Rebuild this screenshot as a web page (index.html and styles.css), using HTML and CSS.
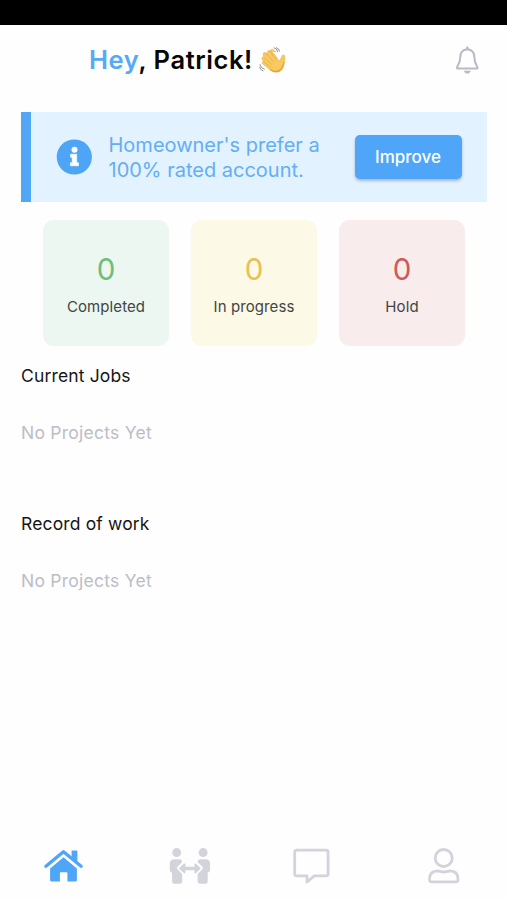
FILE: index.html
```html
<!DOCTYPE html>
<html lang="en">
<head>
<meta charset="utf-8">
<meta name="viewport" content="width=device-width, initial-scale=1">
<title>Home</title>
<link rel="stylesheet" href="styles.css">
</head>
<body>
<div class="screen">
  <div class="statusbar"></div>
  <header class="header">
    <h1 class="greeting"><span class="hey">Hey</span>, Patrick!</h1>
    <svg class="wave" viewBox="256 44 32 32" aria-hidden="true">
      <g fill="none" stroke-linecap="round">
        <path d="M275.5 51.6L272.6 49.4Q271.2 48.6 270.8 50.6L275 55.2 279.2 61.2 281.4 57.6Q282 54.4 283.8 55Q285.6 56 284.5 60.5L283.8 65.5Q282.7 71.8 276.4 72.2Q272.8 72.2 270 69.7L262.5 63.6Q261.4 61.6 263.6 61.6L262 59.2Q261.2 56.8 263.7 57.2L263.2 54Q263.6 51.7 266 53L267.4 54 267.3 51.6Q268 49.7 270 50.8Z" fill="#f7c95e" stroke="#efb74c" stroke-width=".7"/>
        <path d="M266 53.5L273.5 61.5M264 57.3L271.5 64.4M264 61.8L270.4 67.2M269.8 51L276 59.3" stroke="#e3a942" stroke-width=".7"/>
        <path d="M270.5 69.7Q276.5 73.6 281 69.2Q283.5 66 284 62" stroke="#dfa13c" stroke-width="1.2"/>
        <path d="M274 47.8Q277.2 48 277.8 51.8M276.5 47.6Q279.3 48.4 279.5 51.2M260 64.5Q260.6 68.2 264.3 69.3M259.5 67Q260.4 70.3 263 71" stroke="#888" stroke-width=".9"/>
      </g>
    </svg>
    <svg class="bell" viewBox="452 42 32 34" aria-hidden="true">
      <path d="M467.3 48.3C462.4 48.8 460.2 51.7 460.2 56.4C460.2 62.2 457.8 63.6 457 66.5Q456.8 67.5 458 67.5H476.6Q477.8 67.5 477.5 66.5C476.7 63.6 474.4 62.2 474.4 56.4C474.4 51.7 472.2 48.8 467.3 48.3Z" fill="none" stroke="#b9bac5" stroke-width="2"/>
      <path d="M467.3 48V46.6" stroke="#b9bac5" stroke-width="2.4" stroke-linecap="round"/>
      <path d="M463.9 69.8H470.8Q470 72.6 467.3 72.6T463.9 69.8Z" fill="#b9bac5"/>
    </svg>
  </header>

  <section class="notice">
    <svg class="info" viewBox="0 0 36 36" aria-hidden="true">
      <circle cx="18.3" cy="18" r="17.6" fill="#4fa5f5"/>
      <circle cx="18.5" cy="10.7" r="3" fill="#fff"/>
      <path d="M14.6 15.2H20.7V23.8H22.5V26.8H14.4V23.8H16.2V18.2H14.6Z" fill="#fff" stroke="#fff" stroke-width=".6" stroke-linejoin="round"/>
    </svg>
    <p class="message">Homeowner's prefer a<br>100% rated account.</p>
    <button class="improve" type="button">Improve</button>
  </section>

  <section class="stats">
    <div class="stat completed"><span class="count">0</span><span class="label">Completed</span></div>
    <div class="stat progress"><span class="count">0</span><span class="label">In progress</span></div>
    <div class="stat hold"><span class="count">0</span><span class="label">Hold</span></div>
  </section>

  <section class="jobs">
    <h2 class="title">Current Jobs</h2>
    <p class="empty">No Projects Yet</p>
  </section>
  <section class="jobs">
    <h2 class="title">Record of work</h2>
    <p class="empty">No Projects Yet</p>
  </section>

  <nav class="tabs">
    <a class="tab active" aria-label="Home">
      <svg viewBox="38.4 844 50 44">
        <path d="M46.3 866.2L63.9 851.7L81.5 866.2" fill="none" stroke="currentColor" stroke-width="3.4" stroke-linecap="round" stroke-linejoin="round"/>
        <path d="M72.4 850.4H76.8Q77.8 850.4 77.8 851.4V863L72 858.2V851.2Q72 850.4 72.4 850.4Z" fill="currentColor"/>
        <path d="M63.9 857.3L77.3 868.4V880Q77.3 881.6 75.8 881.6H67.8V873.2Q67.8 872.3 66.9 872.3H61.2Q60.3 872.3 60.3 873.2V881.6H52Q50.5 881.6 50.5 880V868.4Z" fill="currentColor"/>
      </svg>
    </a>
    <a class="tab" aria-label="People">
      <svg viewBox="165.1 844 50 44">
        <g fill="currentColor">
          <circle cx="176.8" cy="852.6" r="4.5"/>
          <circle cx="203.2" cy="852.6" r="4.5"/>
          <path d="M174 859.2H179.8Q182.2 859.4 182.4 862L177.7 866.6Q176.4 868 177.7 869.5L182.3 874V881.8Q182 883.8 180 883.8H174.2Q172.4 883.6 172.2 881.8V872.8Q170 872 169.9 870V863.2Q170.2 859.5 174 859.2Z"/>
          <path d="M206 859.2H200.2Q197.8 859.4 197.6 862L202.3 866.6Q203.6 868 202.3 869.5L197.7 874V881.8Q198 883.8 200 883.8H205.8Q207.6 883.6 207.8 881.8V872.8Q210 872 210.1 870V863.2Q209.8 859.5 206 859.2Z"/>
          <path d="M179 868.5L183.8 863.8Q185.4 862.8 185.5 864.5V866.7H194.5V864.5Q194.6 862.8 196.2 863.8L201 868.5L196.2 873.1Q194.6 874.1 194.5 872.4V870.3H185.5V872.4Q185.4 874.1 183.8 873.1Z"/>
        </g>
      </svg>
    </a>
    <a class="tab" aria-label="Messages">
      <svg viewBox="291.9 844 50 44">
        <path d="M296.8 850.1H325.8Q328 850.1 328 852.3V873.7Q328 875.9 325.8 875.9H314.2L306.9 882V875.9H296.8Q294.6 875.9 294.6 873.7V852.3Q294.6 850.1 296.8 850.1Z" fill="none" stroke="currentColor" stroke-width="2.8" stroke-linejoin="round"/>
      </svg>
    </a>
    <a class="tab" aria-label="Profile">
      <svg viewBox="418.6 844 50 44">
        <g fill="none" stroke="currentColor" stroke-width="2.8">
          <circle cx="443.3" cy="858" r="8.5"/>
          <path d="M437 870.9C439 870.9 440.5 872 443.3 872S447.7 870.9 449.7 870.9Q457.2 871.1 457.5 878.5V880Q457.4 881.9 455.5 881.9H431.2Q429.3 881.9 429.2 880V878.5Q429.5 871.1 437 870.9Z"/>
        </g>
      </svg>
    </a>
  </nav>
</div>
</body>
</html>
```

FILE: styles.css
```css
* {
  box-sizing: border-box;
}

body,
h1,
h2,
p {
  margin: 0;
}

body {
  font-family: Inter, "Liberation Sans", sans-serif;
  background: #fefefe;
  color: #161616;
}

.screen {
  display: flex;
  flex-direction: column;
  height: 900px;
}

.statusbar {
  height: 25px;
  background: #000;
}

.header {
  display: flex;
  align-items: center;
  height: 70px;
  padding: 0 23px 0 89px;
}

.greeting {
  font-size: 25.5px;
  line-height: 32px;
  font-weight: 600;
  letter-spacing: 0.6px;
  width: 167px;
  white-space: nowrap;
  color: #060606;
}

.hey {
  color: #55a9f6;
}

.wave {
  width: 32px;
  height: 32px;
}

.bell {
  width: 32px;
  height: 34px;
  margin-left: auto;
}

.notice {
  display: flex;
  align-items: center;
  height: 90px;
  margin: 17px 20px 0 21px;
  padding: 0 25px;
  border-left: 10px solid #51a6f5;
  background: #e2f2fe;
}

.info {
  flex: none;
  width: 36px;
  height: 36px;
}

.message {
  width: 230px;
  margin-left: 16.5px;
  padding-top: 1px;
  font-size: 20px;
  line-height: 24.5px;
  white-space: nowrap;
  color: #65aef3;
}

.improve {
  flex: none;
  width: 107px;
  height: 44px;
  margin-left: auto;
  padding: 0 1px 0 0;
  border: 0;
  border-radius: 5px;
  background: #4fa6f8;
  box-shadow: 0 2px 3px rgba(60, 80, 110, 0.35);
  font: 500 17px/44px Inter, sans-serif;
  color: #fff;
}

.stats {
  display: flex;
  gap: 22px;
  margin: 18px 42px 0 43px;
}

.stat {
  flex: 1;
  display: flex;
  flex-direction: column;
  align-items: center;
  height: 126px;
  padding-top: 30px;
  border-radius: 11px;
}

.count {
  font-size: 29.5px;
  line-height: 38px;
  font-weight: 400;
}

.label {
  margin-top: 9px;
  font-size: 15px;
  line-height: 20px;
  letter-spacing: 0.1px;
  color: #424542;
}

.completed {
  background: #ecf7f2;
}

.completed .count {
  color: #70bd7a;
}

.progress {
  background: #fcf9e7;
}

.progress .count {
  color: #e8c150;
}

.hold {
  background: #f8eced;
}

.hold .count {
  color: #ce5b57;
}

.jobs {
  height: 148px;
  padding: 18px 21px 0;
}

.title {
  font-size: 17.5px;
  line-height: 24px;
  font-weight: 400;
  letter-spacing: 0.15px;
}

.empty {
  margin-top: 33px;
  font-size: 17.5px;
  line-height: 24px;
  letter-spacing: 0.25px;
  color: #bcbdc7;
}

.tabs {
  display: flex;
  margin-top: auto;
  padding-bottom: 12px;
}

.tab {
  flex: 1;
  display: flex;
  justify-content: center;
  color: #d3d3dc;
}

.tab svg {
  width: 50px;
  height: 44px;
}

.active {
  color: #50a6f6;
}
```
